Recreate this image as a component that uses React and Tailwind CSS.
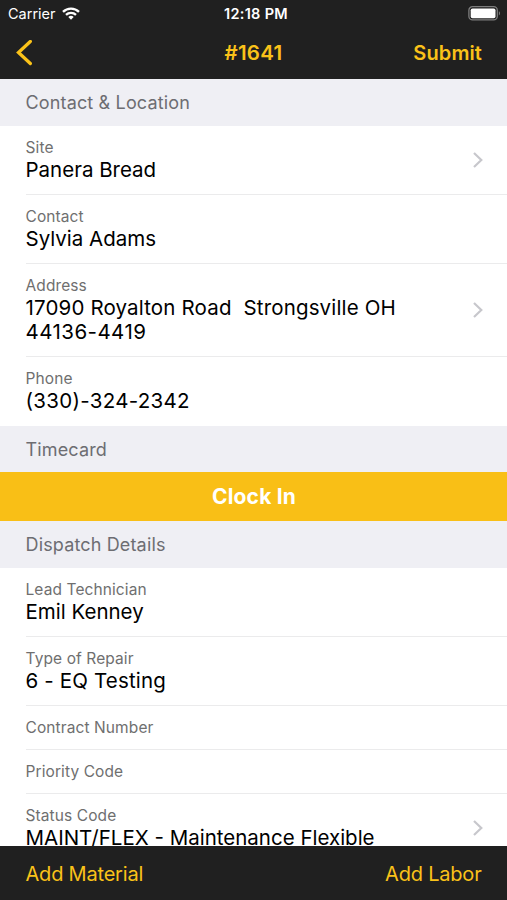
// Work order detail screen: contact info, timecard and dispatch details.

const contactRows = [
  { label: 'Site', value: 'Panera Bread', link: true },
  { label: 'Contact', value: 'Sylvia Adams' },
  {
    label: 'Address',
    value: '17090 Royalton Road  Strongsville OH 44136-4419',
    link: true,
    spacing: 'tracking-[0.45px] first-line:tracking-[0.16px]',
  },
  { label: 'Phone', value: '(330)-324-2342', spacing: 'tracking-[0.3px]' },
]

const dispatchRows = [
  { label: 'Lead Technician', value: 'Emil Kenney' },
  { label: 'Type of Repair', value: '6 - EQ Testing', spacing: 'tracking-[0.16px]' },
  { label: 'Contract Number' },
  { label: 'Priority Code' },
  { label: 'Status Code', value: 'MAINT/FLEX - Maintenance Flexible', link: true },
]

function WifiIcon() {
  return (
    <svg width="18" height="13" viewBox="0 0 18 13" fill="none" stroke="#fff" strokeWidth="2.3">
      <path d="M1 4.9a11.3 11.3 0 0 1 16 0" />
      <path d="M4 7.9a7.1 7.1 0 0 1 10 0" />
      <path d="M9 12.7 6.3 10a3.8 3.8 0 0 1 5.4 0Z" fill="#fff" stroke="none" />
    </svg>
  )
}

function BatteryIcon() {
  return (
    <svg width="33" height="15" viewBox="0 0 33 15">
      <rect x="0.9" y="0.7" width="28.4" height="13.2" rx="3.6" fill="none" stroke="#7d7d7d" strokeWidth="1.3" />
      <rect x="2.7" y="2.4" width="24.8" height="9.8" rx="1.8" fill="#fff" />
      <path d="M30.9 5.2c1.5.6 1.5 3.6 0 4.2Z" fill="#7d7d7d" />
    </svg>
  )
}

function Chevron() {
  return (
    <svg className="shrink-0" width="10" height="16" viewBox="0 0 10 16" fill="none" stroke="#c7c7cc" strokeWidth="2.2">
      <path d="m1 1 7.3 7L1 15" />
    </svg>
  )
}

function SectionHeader({ title, className }) {
  return (
    <h2 className={`flex shrink-0 items-center bg-[#efeff4] pt-px pl-[25.5px] text-[18px] tracking-[0.15px] text-[#6d6d72] ${className}`}>
      {title}
    </h2>
  )
}

function Row({ label, value, link, last, spacing = '' }) {
  return (
    <div className={`ml-[25.5px] flex shrink-0 items-center border-b pr-6 ${last ? 'border-transparent' : 'border-[#ebebec]'}`}>
      <div className="flex-1 pt-3 pb-[11px]">
        <div className="text-[15.5px] leading-5 tracking-[0.1px] text-[#6f6f6f]">{label}</div>
        {value && (
          <div className={`mr-12 whitespace-pre-wrap pb-px text-[20.5px] leading-6 text-black ${spacing}`}>
            {value}
          </div>
        )}
      </div>
      {link && <Chevron />}
    </div>
  )
}

export default function App() {
  return (
    <div className="flex h-[900px] w-[507px] flex-col overflow-hidden bg-white font-['Inter',sans-serif]">
      <header className="h-[79px] shrink-0 bg-[#202020]">
        <div className="grid h-[27px] grid-cols-3 items-center px-[8px] text-white">
          <div className="flex items-center gap-[6px] text-[14.5px]">
            Carrier
            <WifiIcon />
          </div>
          <div className="pl-[5px] text-center text-[14.5px] font-semibold tracking-[0.3px]">12:18 PM</div>
          <div className="-mr-[2px] flex justify-end">
            <BatteryIcon />
          </div>
        </div>
        <div className="grid h-[51px] grid-cols-3 items-center pr-[25px] pl-4 text-[20px] font-semibold text-[#fac219]">
          <svg width="17" height="26" viewBox="0 0 17 26" fill="none" stroke="currentColor" strokeWidth="3.3" strokeLinecap="round">
            <path d="M14.3 1.5 2.5 12.5l11.8 11" />
          </svg>
          <div className="pt-px pl-[9px] text-center text-[20.5px] tracking-[0.3px]">#1641</div>
          <div className="text-right tracking-[0.1px]">Submit</div>
        </div>
      </header>

      <main className="flex min-h-0 flex-1 flex-col overflow-hidden">
        <SectionHeader title="Contact & Location" className="h-[46.5px]" />
        {contactRows.map((row, i) => (
          <Row key={row.label} {...row} last={i === contactRows.length - 1} />
        ))}

        <SectionHeader title="Timecard" className="h-[46.5px]" />
        <button className="h-[48.5px] shrink-0 bg-[#f9bf16] pt-px pl-px text-[21px] font-bold tracking-[0.2px] text-white">
          Clock In
        </button>

        <SectionHeader title="Dispatch Details" className="h-[47.5px]" />
        {dispatchRows.map((row) => (
          <Row key={row.label} {...row} />
        ))}
      </main>

      <footer className="flex h-[54px] shrink-0 items-center justify-between bg-[#202020] px-[25.5px] pt-px text-[20px] tracking-[-0.2px] text-[#fac219]">
        <span>Add Material</span>
        <span>Add Labor</span>
      </footer>
    </div>
  )
}
